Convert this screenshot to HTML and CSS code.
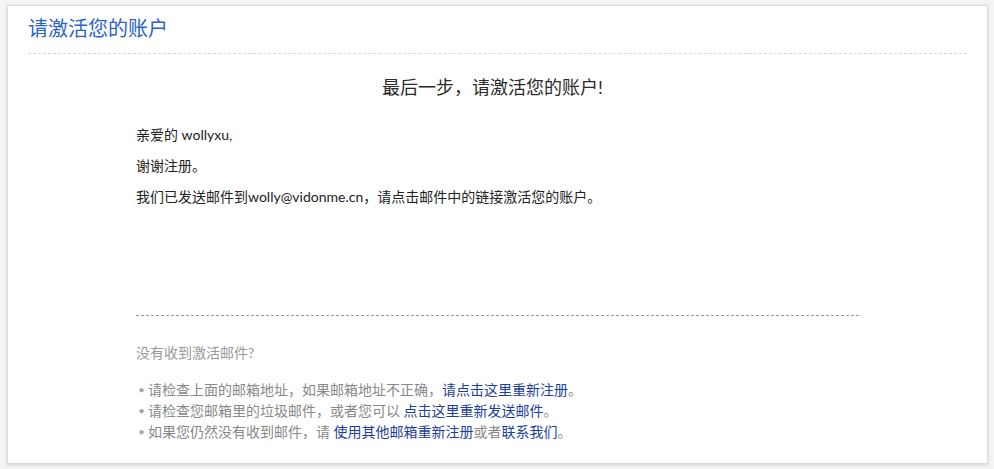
FILE: index.html
```html
<!DOCTYPE html>
<html lang="zh-CN">
<head>
<meta charset="utf-8">
<title>请激活您的账户</title>
<link rel="stylesheet" href="styles.css">
</head>
<body>
<div class="card">
  <div class="card-header">
    <h1 class="title">请激活您的账户</h1>
  </div>
  <div class="card-body">
    <h2 class="heading">最后一步，请激活您的账户!</h2>
    <div class="message">
      <p class="msg-line">亲爱的 wollyxu,</p>
      <p class="msg-line">谢谢注册。</p>
      <p class="msg-line">我们已发送邮件到wolly@vidonme.cn，请点击邮件中的链接激活您的账户。</p>
    </div>
    <div class="help">
      <p class="help-title">没有收到激活邮件?</p>
      <ul class="help-list">
        <li class="help-item">请检查上面的邮箱地址，如果邮箱地址不正确，<a class="link" href="#">请点击这里重新注册</a>。</li>
        <li class="help-item">请检查您邮箱里的垃圾邮件，或者您可以 <a class="link" href="#">点击这里重新发送邮件</a>。</li>
        <li class="help-item">如果您仍然没有收到邮件，请 <a class="link" href="#">使用其他邮箱重新注册</a>或者<a class="link" href="#">联系我们</a>。</li>
      </ul>
    </div>
  </div>
</div>
</body>
</html>
```

FILE: styles.css
```css
html, body {
  margin: 0;
  padding: 0;
}
body {
  background: #f4f4f4;
  padding: 5px 6px 5px 7px;
  font-family: "Lato", "Noto Sans CJK SC", sans-serif;
  color: #222;
}
.card {
  background: #fff;
  border: 1px solid #dcdcdc;
  box-shadow: 0 1px 3px rgba(0, 0, 0, 0.15);
  padding: 0 20px;
  height: 457px;
  box-sizing: content-box;
}
.card-header {
  padding: 10px 0 13px;
  border-bottom: 1px dashed #d8d8d8;
}
.title {
  margin: 0;
  font-size: 20px;
  line-height: 24px;
  font-weight: normal;
  color: #2b63c6;
}
.card-body {
  padding: 0 108px;
}
.heading {
  margin: 21px 0 0;
  padding-right: 10px;
  font-size: 18px;
  line-height: 24px;
  font-weight: normal;
  text-align: center;
  color: #2a2a2a;
}
.message {
  padding: 26px 0 108px;
  border-bottom: 1px dashed #999;
}
.msg-line {
  margin: 0 0 11px;
  font-size: 14px;
  line-height: 20px;
}
.msg-line:last-child {
  margin-bottom: 0;
}
.help-title {
  margin: 27px 0 0;
  font-size: 14px;
  line-height: 20px;
  color: #999;
}
.help-list {
  list-style: none;
  margin: 16px 0 0;
  padding: 0;
}
.help-item {
  font-size: 14px;
  line-height: 21px;
  color: #888;
  padding-left: 2px;
}
.help-item::before {
  content: "•";
  display: inline-block;
  width: 10px;
  font-size: 12px;
  vertical-align: 1px;
  color: #aaa;
}
.link {
  color: #1c3e9c;
  text-decoration: none;
}
```
